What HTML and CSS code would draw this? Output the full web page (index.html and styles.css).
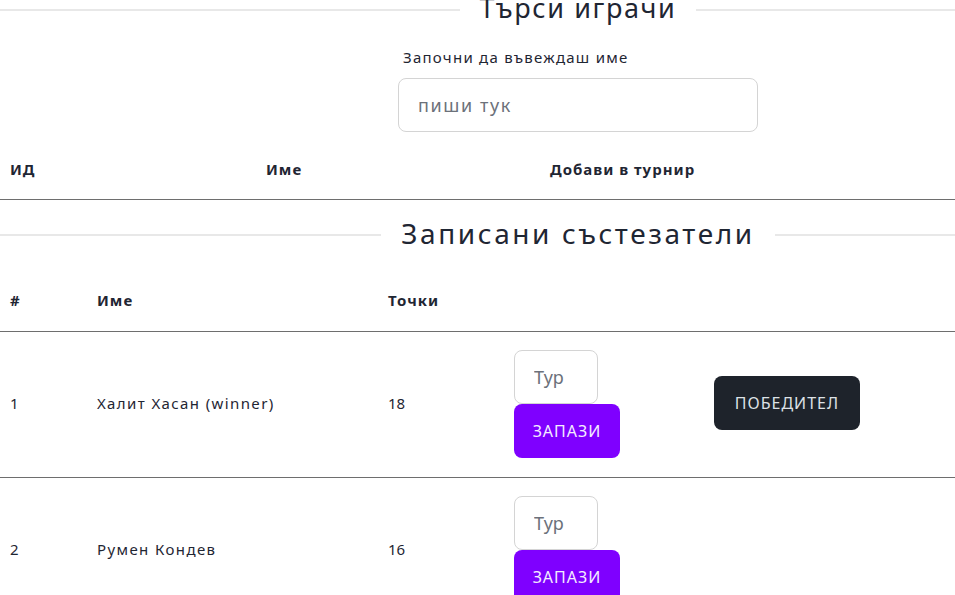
FILE: index.html
```html
<!DOCTYPE html>
<html lang="bg">
<head>
<meta charset="utf-8">
<title>Турнир</title>
<link rel="stylesheet" href="styles.css">
</head>
<body>
<div class="page">
  <h2 class="divider divider-top"><span class="divider-line"></span><span class="divider-text">Търси играчи</span><span class="divider-line"></span></h2>

  <form class="search">
    <label class="search-label" for="q">Започни да въвеждаш име</label>
    <input class="search-input" id="q" type="text" placeholder="пиши тук">
  </form>

  <div class="grid grid-players">
    <div class="th">ИД</div>
    <div class="th">Име</div>
    <div class="th">Добави в турнир</div>
  </div>

  <h2 class="divider divider-mid"><span class="divider-line"></span><span class="divider-text">Записани състезатели</span><span class="divider-line"></span></h2>

  <div class="grid grid-entrants">
    <div class="th">#</div>
    <div class="th">Име</div>
    <div class="th">Точки</div>
    <div class="th"></div>
    <div class="th"></div>

    <div class="td">1</div>
    <div class="td td-name">Халит Хасан (winner)</div>
    <div class="td">18</div>
    <div class="td td-stack"><input class="round-input" type="text" placeholder="Тур"><button class="btn btn-purple" type="button">Запази</button></div>
    <div class="td"><button class="btn btn-dark" type="button">Победител</button></div>

    <div class="td">2</div>
    <div class="td td-name">Румен Кондев</div>
    <div class="td">16</div>
    <div class="td td-stack"><input class="round-input" type="text" placeholder="Тур"><button class="btn btn-purple" type="button">Запази</button></div>
    <div class="td"></div>
  </div>
</div>
</body>
</html>
```

FILE: styles.css
```css
html, body {
  margin: 0;
  padding: 0;
  overflow: hidden;
  background: #ffffff;
}

body {
  font-family: "Noto Sans", "DejaVu Sans", sans-serif;
  color: #1f2633;
}

.page {
  width: 1156px;
}

.divider {
  display: flex;
  align-items: center;
  gap: 20px;
  height: 40px;
  margin: 0;
  font-size: 27px;
  font-weight: 400;
  letter-spacing: 1.6px;
  line-height: 40px;
  white-space: nowrap;
}

.divider-text {
  position: relative;
  top: -2px;
}

.divider-top {
  margin-top: -10px;
}

.divider-mid {
  margin-top: 15px;
  font-size: 28px;
  letter-spacing: 2.6px;
}

.divider-line {
  flex: 1 1 0;
  height: 2px;
  background: #e8e8e8;
}

.search {
  width: 360px;
  margin: 15px auto 0;
  display: flex;
  flex-direction: column;
}

.search-label {
  padding-left: 5px;
  font-size: 15px;
  line-height: 24px;
  letter-spacing: 1.25px;
  margin-bottom: 9px;
}

.search-input {
  box-sizing: border-box;
  width: 360px;
  height: 54px;
  border: 1px solid #d4d4d4;
  border-radius: 8px;
  padding: 0 19px;
  font-family: inherit;
  font-size: 18px;
  letter-spacing: 1.6px;
  color: #1f2633;
  outline: none;
}

.search-input::placeholder,
.round-input::placeholder {
  color: #6c717a;
}

.grid {
  display: grid;
}

.grid-players {
  grid-template-columns: 256px 284px 1fr;
  margin-top: 7px;
}

.grid-entrants {
  grid-template-columns: 87px 291px 126px 200px 1fr;
  margin-top: 14px;
}

.th {
  padding: 18px 10px;
  font-size: 15px;
  font-weight: 700;
  line-height: 24px;
  letter-spacing: 1px;
  border-bottom: 1px solid #6e6e6e;
}

.grid-entrants .th {
  padding: 19px 10px;
}

.td {
  display: flex;
  align-items: center;
  padding: 17px 10px 20px;
  font-size: 15px;
  line-height: 24px;
  letter-spacing: 0;
  border-bottom: 1px solid #6e6e6e;
}

.td-name {
  letter-spacing: 1.4px;
}

.td-stack {
  flex-direction: column;
  align-items: flex-start;
  padding: 18px 10px 19px;
}

.round-input {
  box-sizing: border-box;
  width: 84px;
  height: 54px;
  border: 1px solid #d4d4d4;
  border-radius: 8px;
  padding: 0 19px;
  font-family: inherit;
  font-size: 18px;
  color: #1f2633;
  outline: none;
}

.btn {
  box-sizing: border-box;
  height: 54px;
  border: none;
  border-radius: 8px;
  padding: 0 10px;
  font-family: inherit;
  font-size: 16px;
  text-transform: uppercase;
  letter-spacing: 1px;
  cursor: pointer;
}

.btn-purple {
  width: 106px;
  background: #7f00ff;
  color: #f3ebff;
}

.btn-dark {
  width: 146px;
  background: #1e232b;
  color: #dde1e6;
}
```
